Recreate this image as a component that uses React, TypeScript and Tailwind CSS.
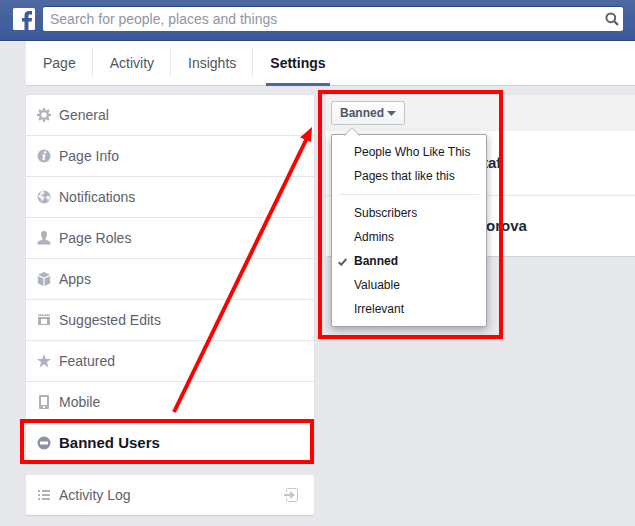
import React from "react";
import clsx from "clsx";

const Icon = ({ children }: { children: React.ReactNode }) => (
  <svg viewBox="0 0 14 14" className="h-3.5 w-3.5 flex-shrink-0" fill="currentColor" aria-hidden="true">
    {children}
  </svg>
);

const GearIcon = () => (
  <Icon>
    <path
      fillRule="evenodd"
      d="M7 2a5 5 0 1 0 0 10A5 5 0 0 0 7 2zm0 2.2a2.8 2.8 0 1 1 0 5.6 2.8 2.8 0 0 1 0-5.6z"
    />
    {[0, 45, 90, 135, 180, 225, 270, 315].map((angle) => (
      <path key={angle} d="M5.7 2.8 6 0h2l.3 2.8z" transform={`rotate(${angle} 7 7)`} />
    ))}
  </Icon>
);

const InfoIcon = () => (
  <Icon>
    <circle cx="7" cy="7" r="6.5" />
    <circle cx="8" cy="3.4" r="1.2" fill="#fff" />
    <path d="M5.2 5.4h3.300L7.4 9.8h1l-.3 1c-1.300.8-3 .7-2.700-.8L6.200 6.400h-1z" fill="#fff" />
  </Icon>
);

const GlobeIcon = () => (
  <Icon>
    <circle cx="7" cy="7" r="6.5" />
    <path
      d="M5 1 7.500.7 6.800 2l1 .8-1.600 1.600-1.400.4-.4 1 1.800.4 1.400 1.200-.8 1.600L5.600 10l-.2 2-1-1-.4-2.200-1.400-1.400L1.200 7.200l.2-1.800L3.600 4 3 3z"
      fill="#fff"
      fillOpacity=".85"
    />
    <path d="M9.200 6.400l1.600-.8 2.200.8-.2 2.200-1.200 2-1 .4-.2-1.800-1.400-1z" fill="#fff" fillOpacity=".85" />
  </Icon>
);

const PersonIcon = () => (
  <Icon>
    <path d="M7 0c2.100 0 3.100 1.300 3 3.300-.1 1.800-.6 2.900-1.400 3.700v1.700c1.400.7 4.900 1 4.900 3.300v1.500H.5V12c0-2.300 3.500-2.600 4.900-3.300V7C4.600 6.200 4.100 5.100 4 3.300 3.900 1.300 4.900 0 7 0z" />
  </Icon>
);

const CubeIcon = () => (
  <Icon>
    <path d="M7 0l6 2.700-6 2.800-6-2.800z" />
    <path d="M.8 3.900 6.400 6.500V14L.8 11.200zM13.200 3.900 7.600 6.500V14l5.600-2.800z" />
  </Icon>
);

const EditsIcon = () => (
  <Icon>
    <path
      fillRule="evenodd"
      d="M1 1h1v1h1V1h1v1h1V1h1v1h2V1h1v1h1V1h1v1h1V1h1v2H1zM1 4h12v8H1zm3 2v5h6V6z"
    />
  </Icon>
);

const StarIcon = () => (
  <Icon>
    <path d="M7 0l1.700 4.900h5.300L9.900 8.100l1.500 5.300L7 10.300l-4.400 3.100 1.500-5.300L0 4.900h5.300z" />
  </Icon>
);

const MobileIcon = () => (
  <Icon>
    <path
      fillRule="evenodd"
      d="M3 0h8a1 1 0 0 1 1 1v12a1 1 0 0 1-1 1H3a1 1 0 0 1-1-1V1a1 1 0 0 1 1-1zm1 2v8h6V2zm2 9v2h2v-2z"
    />
  </Icon>
);

const MinusIcon = () => (
  <Icon>
    <path fillRule="evenodd" d="M7 .5a6.500 6.500 0 1 0 0 13 6.500 6.500 0 0 0 0-13zM3 5.500h8v3H3z" />
  </Icon>
);

const ListIcon = () => (
  <Icon>
    <path d="M1 2h2v2H1zM5 2h8v2H5zM1 6h2v2H1zM5 6h8v2H5zM1 10h2v2H1zM5 10h8v2H5z" />
  </Icon>
);

const tabs = ["Page", "Activity", "Insights"];

const settings = [
  { label: "General", icon: <GearIcon /> },
  { label: "Page Info", icon: <InfoIcon /> },
  { label: "Notifications", icon: <GlobeIcon /> },
  { label: "Page Roles", icon: <PersonIcon /> },
  { label: "Apps", icon: <CubeIcon /> },
  { label: "Suggested Edits", icon: <EditsIcon /> },
  { label: "Featured", icon: <StarIcon /> },
  { label: "Mobile", icon: <MobileIcon /> },
];

const menuGroups = [
  ["People Who Like This", "Pages that like this"],
  ["Subscribers", "Admins", "Banned", "Valuable", "Irrelevant"],
];

const Header = () => (
  <header className="flex h-[41px] items-start border-b border-[#2f477a] bg-linear-to-b from-[#4e69a2] to-[#3b5998] pt-[7px] pr-3 pl-[13px]">
    <a href="#home" aria-label="Home" className="mt-px mr-2 flex-shrink-0">
      <svg viewBox="0 0 22 22" className="h-[22px] w-[22px]" aria-hidden="true">
        <rect width="22" height="22" rx="1.5" fill="#fff" />
        <path d="M11.500 22v-8.500H9V10h2.500V7.500C11.500 4.600 13 3 15.800 3H19v3.500h-2c-1.200 0-1.500.5-1.500 1.500v2H19l-.4 3.500h-3.100V22z" fill="#3f5b9a" />
      </svg>
    </a>
    <form role="search" className="flex h-6 min-w-0 flex-1 items-center rounded-xs bg-white pr-1 pl-[7px] shadow-[0_-1px_0_#2f477a]">
      <input
        type="text"
        aria-label="Search"
        placeholder="Search for people, places and things"
        className="h-6 min-w-0 flex-1 bg-transparent text-sm text-[#4e5665] outline-none placeholder:text-[#8f95a3]"
      />
      <button type="submit" aria-label="Submit search" className="text-[#5b6172]">
        <svg viewBox="0 0 14 14" className="h-3.5 w-3.5" fill="none" stroke="currentColor" aria-hidden="true">
          <circle cx="5.8" cy="5.8" r="4.4" strokeWidth="2" />
          <path d="M9 9l4 4" strokeWidth="2.4" />
        </svg>
      </button>
    </form>
  </header>
);

const TabBar = () => (
  <nav className="ml-[26px] flex h-[45px] items-center rounded-bl-xs border-b border-[#d0d3d9] bg-white text-sm text-[#4e5665]">
    {tabs.map((tab) => (
      <a key={tab} href="#tab" className="flex h-7 items-center border-r border-[#e5e6e9] pr-4 pl-[17px]">
        {tab}
      </a>
    ))}
    <a
      href="#settings"
      aria-current="page"
      className="-mb-px ml-[13px] flex h-[45px] items-center border-b-[3px] border-[#4e69a2] px-1 pt-0.5 font-bold text-[#141823]"
    >
      Settings
    </a>
  </nav>
);

const Sidebar = () => (
  <aside className="w-72 flex-shrink-0 text-sm text-[#5d626c]">
    <ul className="rounded-xs bg-white shadow-[0_0_0_1px_#dfe1e5]">
      {settings.map(({ label, icon }) => (
        <li key={label} className="border-b border-[#e5e6e9]">
          <a href="#setting" className="flex h-10 items-center gap-2 pl-[11px]">
            <span className="text-[#adb2bd]">{icon}</span>
            {label}
          </a>
        </li>
      ))}
      <li className="relative">
        <a href="#banned" className="flex h-10 items-center gap-2 pl-[11px] text-[15px] font-bold text-[#141823]">
          <span className="text-[#8d93a3]">
            <MinusIcon />
          </span>
          Banned Users
        </a>
        <div className="pointer-events-none absolute -top-1 right-0 -bottom-px -left-1.5 border-4 border-[#ff0000]" />
      </li>
    </ul>

    <a
      href="#log"
      className="mt-3 flex h-10 items-center gap-2 rounded-xs bg-white pr-4 pl-[11px] shadow-[0_1px_1px_#cdced3]"
    >
      <span className="text-[#adb2bd]">
        <ListIcon />
      </span>
      <span className="flex-1">Activity Log</span>
      <svg viewBox="0 0 14 14" className="h-3.5 w-3.5 text-[#c3c6cd]" fill="none" stroke="currentColor" aria-hidden="true">
        <path d="M2.500 4V1.500a1 1 0 0 1 1-1h9a1 1 0 0 1 1 1v11a1 1 0 0 1-1 1h-9a1 1 0 0 1-1-1V10" />
        <path d="M0 6h6V3l5 4-5 4V8H0z" fill="currentColor" stroke="none" />
      </svg>
    </a>
  </aside>
);

const FilterMenu = () => (
  <div
    role="menu"
    className="absolute top-[39px] left-[5px] z-10 w-[156px] rounded-xs border border-[#a5a7ac] bg-white py-[5px] text-xs text-[#141823] shadow-[0_3px_8px_rgba(0,0,0,0.3)]"
  >
    <svg viewBox="0 0 16 9" className="absolute -top-2 left-3 h-[9px] w-4" aria-hidden="true">
      <path d="M1 8.500 8 1l7 7.500V9H1z" fill="#fff" />
      <path d="M.5 8.500 8 .7l7.500 7.800" fill="none" stroke="#b5b7bc" />
    </svg>
    {menuGroups.map((group, index) => (
      <React.Fragment key={index}>
        {index > 0 && <hr className="mx-[7px] my-1.5 border-[#e5e6e9]" />}
        {group.map((item) => (
          <button
            key={item}
            type="button"
            role="menuitemradio"
            aria-checked={item === "Banned"}
            className={clsx("flex h-6 w-full items-center pl-1.5", item === "Banned" && "font-bold")}
          >
            <span className="w-4">
              {item === "Banned" && (
                <svg viewBox="0 0 9 8" className="mt-0.5 h-2 w-[9px]" fill="none" stroke="#5c5e63" aria-hidden="true">
                  <path d="M.7 4.300 3.300 6.700 8.300 1" strokeWidth="2" />
                </svg>
              )}
            </span>
            {item}
          </button>
        ))}
      </React.Fragment>
    ))}
  </div>
);

const BannedPanel = () => (
  <main className="relative min-w-0 flex-1">
    <div className="rounded-l-xs border-b border-[#cfd1d8] bg-white">
      <div className="flex h-9 items-center bg-[#f2f2f2] pl-[5px]">
        <button
          type="button"
          aria-haspopup="menu"
          aria-expanded="true"
          className="flex h-6 items-center gap-[3px] rounded-xs border border-[#c4c6ca] bg-linear-to-b from-white to-[#f2f3f5] px-2 text-xs font-bold text-[#4e5665]"
        >
          Banned
          <svg viewBox="0 0 9 5" className="h-[5px] w-[9px]" fill="#5b6172" aria-hidden="true">
            <path d="M0 0h9L4.500 5z" />
          </svg>
        </button>
      </div>
      <ul className="text-[15px] font-bold text-[#1f2838]">
        <li className="flex h-[65px] items-center border-b border-[#e5e6e9] pl-[157px]">taf</li>
        <li className="flex h-[60px] items-center pl-40">orova</li>
      </ul>
    </div>
    <FilterMenu />
    <div className="pointer-events-none absolute -top-[5px] -left-2 z-20 h-[249px] w-[185px] border-4 border-[#ff0000]" />
  </main>
);

export default function App() {
  return (
    <div className="relative min-h-screen overflow-hidden bg-[#e7e8ec] font-['Liberation_Sans',Arial,sans-serif]">
      <Header />
      <TabBar />
      <div className="mt-[9px] ml-[26px] flex items-start gap-3">
        <Sidebar />
        <BannedPanel />
      </div>
      <svg
        viewBox="0 0 142 288"
        className="pointer-events-none absolute top-[126px] left-[171px] z-30 h-[288px] w-[142px]"
        aria-hidden="true"
      >
        <path d="M3 286 136 12" stroke="#ff0000" strokeWidth="4" />
        <path d="M141 1 129 11.500 140 16z" fill="#ff0000" />
      </svg>
    </div>
  );
}
